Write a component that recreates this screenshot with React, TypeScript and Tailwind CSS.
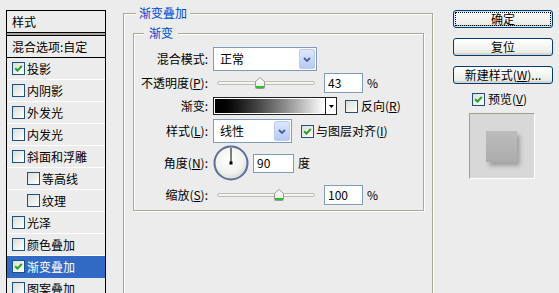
import React from "react";

const items = [
  { label: "投影", checked: true },
  { label: "内阴影" },
  { label: "外发光" },
  { label: "内发光" },
  { label: "斜面和浮雕" },
  { label: "等高线", indent: true },
  { label: "纹理", indent: true },
  { label: "光泽" },
  { label: "颜色叠加" },
  { label: "渐变叠加", checked: true, active: true },
  { label: "图案叠加" },
];

function Check({ checked }: { checked?: boolean }) {
  return (
    <span className="flex h-[13px] w-[13px] shrink-0 items-center justify-center border border-[#1c5180] bg-linear-to-br from-[#dcdcd7] to-white">
      {checked && (
        <svg width="9" height="9" viewBox="0 0 9 9">
          <path d="M1.2 4.2 L3.5 6.6 L7.8 1.8" stroke="#21a121" strokeWidth="2" fill="none" />
        </svg>
      )}
    </span>
  );
}

function DropBtn() {
  return (
    <span className="flex h-full w-[16px] items-center justify-center rounded-[2px] border border-[#b9cdf6] bg-linear-to-b from-[#dde7fe] to-[#b6c9f7]">
      <svg width="8" height="5" viewBox="0 0 8 5">
        <path d="M1 1 L4 4 L7 1" stroke="#4d6185" strokeWidth="1.8" fill="none" />
      </svg>
    </span>
  );
}

function Select({ value, width }: { value: string; width: string }) {
  return (
    <div className={`flex h-[24px] items-stretch border border-[#7f9db9] bg-white p-[1px] ${width}`}>
      <span className="flex flex-1 items-center pl-[5px]">{value}</span>
      <DropBtn />
    </div>
  );
}

function Slider({ pos }: { pos: number }) {
  return (
    <div className="relative h-[20px] w-[98px]">
      <div className="absolute left-0 right-0 top-[8px] h-[4px] rounded-[2px] border border-[#bdbdb8] bg-[#f4f4f0]" />
      <svg className="absolute top-[4px]" style={{ left: pos - 5 }} width="10" height="12" viewBox="0 0 10 12">
        <defs>
          <linearGradient id="th" x1="0" y1="0" x2="0" y2="1">
            <stop offset="0" stopColor="#ffffff" />
            <stop offset="1" stopColor="#e6e6e0" />
          </linearGradient>
        </defs>
        <path d="M0.5 4.5 L5 0.5 L9.5 4.5 V10.5 Q9.5 11.5 8.5 11.5 H1.5 Q0.5 11.5 0.5 10.5 Z" fill="url(#th)" stroke="#9a9a92" />
        <rect x="1" y="9" width="8" height="2" fill="#2ec12e" />
      </svg>
    </div>
  );
}

function NumInput({ value, width, height }: { value: string; width: string; height: string }) {
  return (
    <div className={`flex items-center border border-[#7f9db9] bg-white pl-[3px] ${width} ${height}`}>{value}</div>
  );
}

function Dial() {
  return (
    <svg width="36" height="36" viewBox="0 0 36 36">
      <defs>
        <radialGradient id="dial" cx="0.45" cy="0.4" r="0.6">
          <stop offset="0" stopColor="#ffffff" />
          <stop offset="0.7" stopColor="#f1f1ee" />
          <stop offset="1" stopColor="#d8d8d4" />
        </radialGradient>
      </defs>
      <circle cx="18" cy="18" r="16.5" fill="url(#dial)" stroke="#5b6e98" strokeWidth="2" />
      <line x1="18" y1="18" x2="18" y2="3" stroke="#000" strokeWidth="1" />
      <rect x="16.5" y="16.5" width="3" height="3" fill="#000" />
    </svg>
  );
}

function Label({ children }: { children: React.ReactNode }) {
  return <span className="w-[74px] shrink-0 text-right">{children}</span>;
}

function Btn({ children, primary, className = "" }: { children: React.ReactNode; primary?: boolean; className?: string }) {
  return (
    <div
      className={`flex h-[18px] w-[100px] rounded-[3px] border border-[#003c74] bg-linear-to-b from-white to-[#e8e8e2] p-[1px] ${
        primary ? "shadow-[inset_0_0_0_1px_#cee7ff,inset_0_-1px_0_1px_#8fb1e8]" : "shadow-[inset_0_-2px_0_#d8d6cc]"
      } ${className}`}
    >
      <span
        className={`flex flex-1 items-center justify-center border border-dotted leading-[12px] ${
          primary ? "border-black" : "border-transparent"
        }`}
      >
        {children}
      </span>
    </div>
  );
}

export default function App() {
  return (
    <div className="flex h-[293px] w-[559px] overflow-hidden bg-[#ececec] font-['Noto_Sans_CJK_SC','Liberation_Sans',sans-serif] text-[12px] leading-[16px] text-black">
      {/* style list */}
      <div className="ml-[6px] mt-[10px] h-[300px] w-[100px] shrink-0 border-x border-t border-black">
        <div className="flex h-[21px] items-center pl-[5px]">样式</div>
        <div className="h-[4px] border-y border-black bg-[#aca899]" />
        <div className="flex h-[22px] items-center border-b border-black pl-[5px]">混合选项:自定</div>
        {items.map((it) => (
          <div
            key={it.label}
            className={`flex h-[22px] items-center gap-[2px] border-b ${
              it.active ? "border-[#316ac5] bg-[#316ac5] text-white" : "border-white"
            } ${it.indent ? "pl-[20px]" : "pl-[5px]"}`}
          >
            <Check checked={it.checked} />
            <span>{it.label}</span>
          </div>
        ))}
      </div>

      {/* gradient overlay group */}
      <fieldset className="ml-[17px] mt-[5px] h-[300px] w-[310px] shrink-0 border border-[#aca899] shadow-[inset_1px_1px_0_#fff,1px_1px_0_#fff]">
        <legend className="ml-[12px] bg-[#ececec] px-[3px] leading-[16px] text-[#0046d5]">渐变叠加</legend>
        <fieldset className="ml-[9px] mt-[4px] h-[186px] w-[291px] border border-[#aca899] shadow-[inset_1px_1px_0_#fff,1px_1px_0_#fff]">
          <legend className="ml-[10px] bg-[#ececec] px-[5px] leading-[16px] text-[#0046d5]">渐变</legend>
          <div className="flex flex-col">
            <div className="mt-[6px] flex h-[24px] items-center">
              <Label>混合模式:</Label>
              <div className="ml-[5px]">
                <Select value="正常" width="w-[104px]" />
              </div>
            </div>
            <div className="mt-[2px] flex h-[20px] items-center">
              <Label>
                不透明度(<u>P</u>):
              </Label>
              <div className="ml-[9px]">
                <Slider pos={43} />
              </div>
              <div className="ml-[9px]">
                <NumInput value="43" width="w-[39px]" height="h-[20px]" />
              </div>
              <span className="ml-[4px]">%</span>
            </div>
            <div className="mt-[4px] flex h-[18px] items-center">
              <Label>渐变:</Label>
              <div className="ml-[5px] flex h-[18px] w-[124px] border border-[#202020] bg-white">
                <div className="flex-1 border border-white bg-linear-to-r from-black to-white" />
                <div className="flex w-[11px] items-center justify-center border-l border-[#202020]">
                  <svg width="5" height="3" viewBox="0 0 5 3">
                    <path d="M0 0 H5 L2.5 3 Z" fill="#000" />
                  </svg>
                </div>
              </div>
              <span className="ml-[8px]">
                <Check />
              </span>
              <span className="ml-[3px]">
                反向(<u>R</u>)
              </span>
            </div>
            <div className="mt-[4px] flex h-[24px] items-center">
              <Label>
                样式(<u>L</u>):
              </Label>
              <div className="ml-[5px]">
                <Select value="线性" width="w-[79px]" />
              </div>
              <span className="ml-[9px]">
                <Check checked />
              </span>
              <span className="ml-[2px]">
                与图层对齐(<u>I</u>)
              </span>
            </div>
            <div className="mt-[2px] flex h-[36px] items-center">
              <Label>
                角度(<u>N</u>):
              </Label>
              <div className="ml-[5px] flex">
                <Dial />
              </div>
              <div className="ml-[4px]">
                <NumInput value="90" width="w-[41px]" height="h-[19px]" />
              </div>
              <span className="ml-[4px]">度</span>
            </div>
            <div className="mt-[4px] flex h-[20px] items-center">
              <Label>
                缩放(<u>S</u>):
              </Label>
              <div className="ml-[9px]">
                <Slider pos={62} />
              </div>
              <div className="ml-[9px]">
                <NumInput value="100" width="w-[39px]" height="h-[20px]" />
              </div>
              <span className="ml-[4px]">%</span>
            </div>
          </div>
        </fieldset>
      </fieldset>

      {/* buttons and preview */}
      <div className="ml-[20px] mt-[10px] flex w-[100px] shrink-0 flex-col items-start">
        <Btn primary>确定</Btn>
        <Btn className="mt-[10px]">复位</Btn>
        <Btn className="mt-[10px]">
          新建样式(<u>W</u>)...
        </Btn>
        <div className="ml-[19px] mt-[7px] flex h-[16px] items-center gap-[3px]">
          <Check checked />
          <span>
            预览(<u>V</u>)
          </span>
        </div>
        <div className="ml-[16px] mt-[6px] h-[66px] w-[66px] border-l border-t border-r border-b border-l-[#a0a090] border-t-[#a0a090] border-r-white border-b-white bg-[#d8d8d8] pl-[16px] pt-[17px]">
          <div className="h-[31px] w-[31px] bg-linear-to-b from-[#bcbcbc] to-[#acacac] shadow-[3px_4px_4px_rgba(0,0,0,0.25)]" />
        </div>
      </div>
    </div>
  );
}
